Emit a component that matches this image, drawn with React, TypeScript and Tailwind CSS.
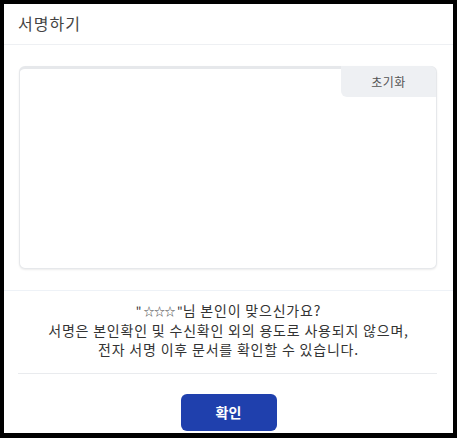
const SignModal = () => {
  return (
    <div className="w-[457px] h-[438px] bg-black pt-[4px] pl-[4px] pr-[4px] pb-[5px]">
      <div
        className="h-full bg-white flex flex-col text-[#333]"
        style={{ fontFamily: '"Noto Sans CJK KR", "Noto Sans", sans-serif' }}
      >
        <div className="h-[41px] shrink-0 border-b border-[#eef0f3] px-[14px] flex items-center">
          <h2 className="text-[16px] leading-none tracking-[1px] text-[#444] -mt-[3px]">서명하기</h2>
        </div>

        <div className="px-[15px] pr-[16px] pt-[21px]">
          <div className="relative h-[203px] rounded-md border border-[#e6e8eb] border-t-[3px] shadow-[0_1px_2px_rgba(0,0,0,0.08)] bg-white">
            <button className="absolute -top-[3px] right-0 w-[95px] h-[31px] bg-[#eef0f3] rounded-bl-md rounded-tr-md text-[12px] tracking-[0.5px] text-[#555]">
              초기화
            </button>
          </div>
        </div>

        <div className="mt-[21px] border-t border-[#eef2f7]">
          <p className="pt-[10px] pb-[14px] text-center text-[14px] leading-[19px] tracking-[0.8px] text-[#333]">
            <span className="text-[12px] tracking-normal">"</span>
            <span className="mx-[2px] text-[11px] tracking-[-0.5px] text-[#444]">☆☆☆</span>
            <span className="text-[12px] tracking-normal">"</span>님 본인이 맞으신가요?
            <br />
            서명은 본인확인 및 수신확인 외의 용도로 사용되지 않으며,
            <br />
            전자 서명 이후 문서를 확인할 수 있습니다.
          </p>
        </div>

        <div className="mx-[14px] mr-[16px] border-t border-[#e9ebee]" />

        <div className="flex justify-center pt-[20px]">
          <button className="w-[96px] h-[37px] rounded-md bg-[#1f40ad] text-white text-[14px] font-bold">
            확인
          </button>
        </div>
      </div>
    </div>
  );
};

export default function App() {
  return <SignModal />;
}
